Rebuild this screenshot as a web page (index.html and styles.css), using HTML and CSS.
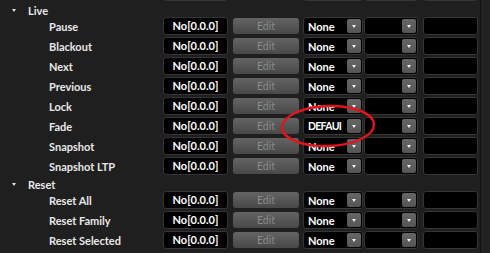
FILE: index.html
```html
<!DOCTYPE html>
<html>
<head>
<meta charset="utf-8">
<link rel="stylesheet" href="styles.css">
</head>
<body>
<div class="page">
  <div class="list">
    <div class="row">
      <div class="label item"></div>
      <div class="key"></div>
      <div class="edit"></div>
      <div class="select s1"><span class="val"></span><span class="arrow"></span></div>
      <div class="select s2"><span class="val"></span><span class="arrow"></span></div>
      <div class="field"></div>
    </div>

    <div class="group"><span class="tri"></span><span class="gname">Live</span></div>

    <div class="row">
      <div class="label item">Pause</div>
      <div class="key">No[0.0.0]</div>
      <div class="edit">Edit</div>
      <div class="select s1"><span class="val">None</span><span class="arrow"></span></div>
      <div class="select s2"><span class="val"></span><span class="arrow"></span></div>
      <div class="field"></div>
    </div>
    <div class="row">
      <div class="label item">Blackout</div>
      <div class="key">No[0.0.0]</div>
      <div class="edit">Edit</div>
      <div class="select s1"><span class="val">None</span><span class="arrow"></span></div>
      <div class="select s2"><span class="val"></span><span class="arrow"></span></div>
      <div class="field"></div>
    </div>
    <div class="row">
      <div class="label item">Next</div>
      <div class="key">No[0.0.0]</div>
      <div class="edit">Edit</div>
      <div class="select s1"><span class="val">None</span><span class="arrow"></span></div>
      <div class="select s2"><span class="val"></span><span class="arrow"></span></div>
      <div class="field"></div>
    </div>
    <div class="row">
      <div class="label item">Previous</div>
      <div class="key">No[0.0.0]</div>
      <div class="edit">Edit</div>
      <div class="select s1"><span class="val">None</span><span class="arrow"></span></div>
      <div class="select s2"><span class="val"></span><span class="arrow"></span></div>
      <div class="field"></div>
    </div>
    <div class="row">
      <div class="label item">Lock</div>
      <div class="key">No[0.0.0]</div>
      <div class="edit">Edit</div>
      <div class="select s1"><span class="val">None</span><span class="arrow"></span></div>
      <div class="select s2"><span class="val"></span><span class="arrow"></span></div>
      <div class="field"></div>
    </div>
    <div class="row">
      <div class="label item">Fade</div>
      <div class="key">No[0.0.0]</div>
      <div class="edit">Edit</div>
      <div class="select s1"><span class="val narrow">DEFAUI</span><span class="arrow"></span></div>
      <div class="select s2"><span class="val"></span><span class="arrow"></span></div>
      <div class="field"></div>
    </div>
    <div class="row">
      <div class="label item">Snapshot</div>
      <div class="key">No[0.0.0]</div>
      <div class="edit">Edit</div>
      <div class="select s1"><span class="val">None</span><span class="arrow"></span></div>
      <div class="select s2"><span class="val"></span><span class="arrow"></span></div>
      <div class="field"></div>
    </div>
    <div class="row">
      <div class="label item">Snapshot LTP</div>
      <div class="key">No[0.0.0]</div>
      <div class="edit">Edit</div>
      <div class="select s1"><span class="val">None</span><span class="arrow"></span></div>
      <div class="select s2"><span class="val"></span><span class="arrow"></span></div>
      <div class="field"></div>
    </div>

    <div class="group"><span class="tri"></span><span class="gname">Reset</span></div>

    <div class="row">
      <div class="label item">Reset All</div>
      <div class="key">No[0.0.0]</div>
      <div class="edit">Edit</div>
      <div class="select s1"><span class="val">None</span><span class="arrow"></span></div>
      <div class="select s2"><span class="val"></span><span class="arrow"></span></div>
      <div class="field"></div>
    </div>
    <div class="row">
      <div class="label item">Reset Family</div>
      <div class="key">No[0.0.0]</div>
      <div class="edit">Edit</div>
      <div class="select s1"><span class="val">None</span><span class="arrow"></span></div>
      <div class="select s2"><span class="val"></span><span class="arrow"></span></div>
      <div class="field"></div>
    </div>
    <div class="row">
      <div class="label item">Reset Selected</div>
      <div class="key">No[0.0.0]</div>
      <div class="edit">Edit</div>
      <div class="select s1"><span class="val">None</span><span class="arrow"></span></div>
      <div class="select s2"><span class="val"></span><span class="arrow"></span></div>
      <div class="field"></div>
    </div>
  </div>
  <div class="scrollbar"></div>

  <svg class="circle" width="110" height="56" viewBox="0 0 110 56">
    <ellipse cx="55" cy="28" rx="46" ry="20" fill="none" stroke="#e3141c" stroke-width="2.4" transform="rotate(-2 55 28)"/>
  </svg>
</div>
</body>
</html>
```

FILE: styles.css
```css
html, body {
  margin: 0;
  padding: 0;
  background: #1f1f1f;
}

body {
  width: 490px;
  height: 253px;
  overflow: hidden;
  font-family: Lato, "Liberation Sans", sans-serif;
  font-size: 11px;
  color: #e8e8e8;
}

.page {
  position: relative;
  display: flex;
  width: 490px;
  height: 253px;
  overflow: hidden;
}

.list {
  width: 480px;
  margin-top: -17px;
  display: flex;
  flex-direction: column;
}

.scrollbar {
  width: 9px;
  border-left: 1px solid #141414;
  background: #222222;
}

.row {
  display: flex;
  align-items: center;
  height: 18px;
  margin-bottom: 2px;
}

.group {
  display: flex;
  align-items: center;
  height: 14px;
  font-weight: 700;
}

.tri {
  width: 0;
  height: 0;
  margin-left: 12px;
  border-left: 2.5px solid transparent;
  border-right: 2.5px solid transparent;
  border-top: 3px solid #e0e0e0;
}

.gname {
  margin-left: 12px;
}

.label {
  width: 163px;
  flex: none;
  box-sizing: border-box;
  font-weight: 700;
  white-space: nowrap;
}

.item {
  padding-left: 49px;
}

.key {
  width: 65px;
  height: 18px;
  box-sizing: border-box;
  flex: none;
  background: #000;
  border: 1px solid #353535;
  border-radius: 3px;
  color: #fff;
  font-weight: 700;
  text-align: center;
  line-height: 16px;
}

.edit {
  width: 66px;
  height: 16px;
  margin-left: 5px;
  flex: none;
  box-sizing: border-box;
  border-radius: 3px;
  background: linear-gradient(#646464, #484848);
  color: #8a8a8a;
  text-align: center;
  line-height: 16px;
  font-size: 10.5px;
}

.select {
  position: relative;
  height: 18px;
  box-sizing: border-box;
  flex: none;
  background: #000;
  border: 1px solid #353535;
  border-radius: 3px;
  display: flex;
  align-items: center;
  justify-content: space-between;
  padding: 0 1px 0 4px;
}

.s1 {
  width: 60px;
  margin-left: 4px;
}

.s2 {
  width: 54px;
  margin-left: 1px;
}

.val {
  color: #fff;
  font-weight: 700;
  white-space: nowrap;
}

.narrow {
  font-size: 10.5px;
  letter-spacing: -0.7px;
}

.arrow {
  width: 14px;
  height: 14px;
  flex: none;
  border-radius: 2px;
  background: linear-gradient(#666666, #555555);
  display: flex;
  align-items: center;
  justify-content: center;
}

.arrow::after {
  content: "";
  width: 0;
  height: 0;
  border-left: 2.5px solid transparent;
  border-right: 2.5px solid transparent;
  border-top: 3px solid #f0f0f0;
}

.field {
  width: 55px;
  height: 18px;
  margin-left: 5px;
  box-sizing: border-box;
  flex: none;
  background: #000;
  border: 1px solid #353535;
  border-radius: 3px;
}

.circle {
  position: absolute;
  left: 273px;
  top: 98px;
}
```
